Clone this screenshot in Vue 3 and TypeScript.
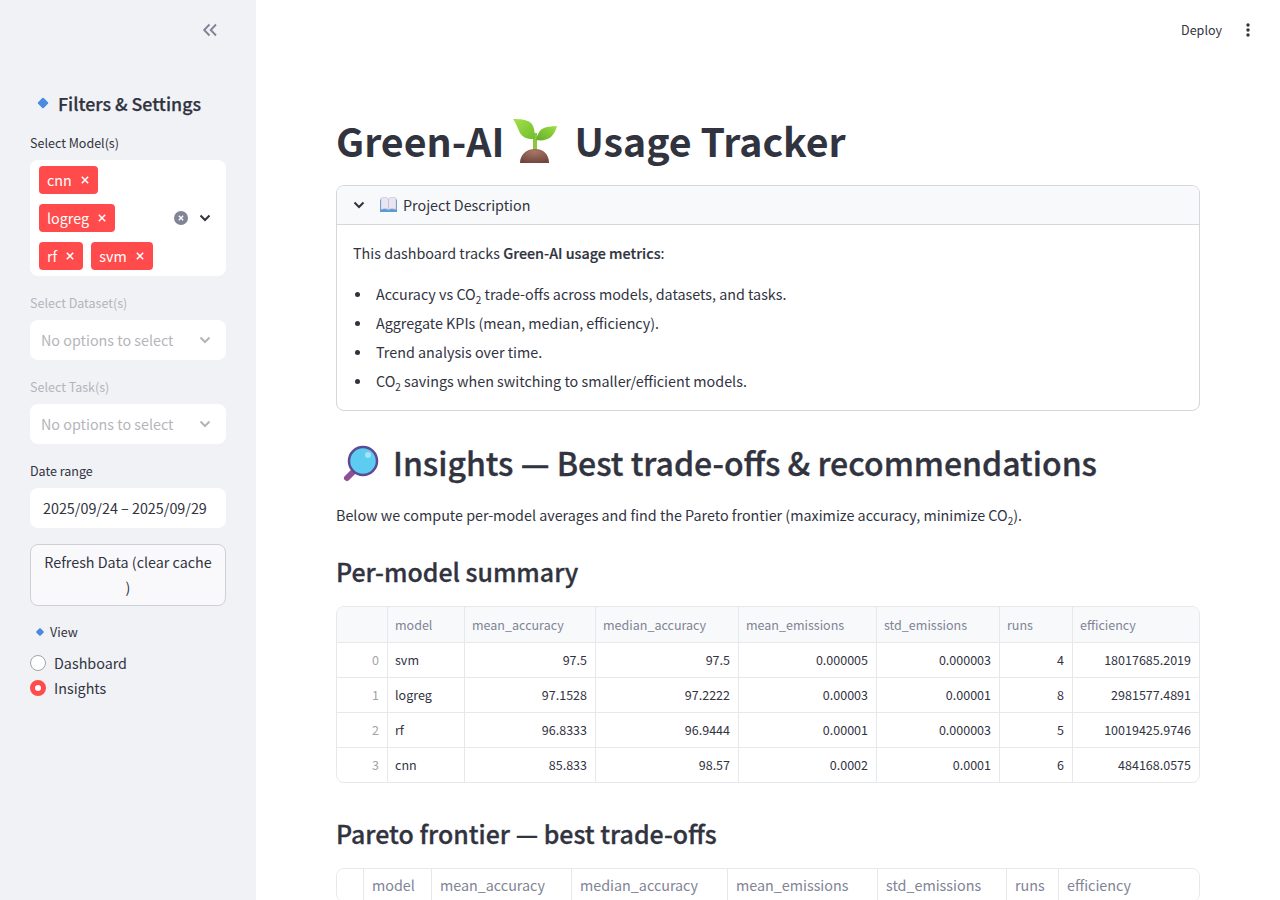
<script setup lang="ts">
import { ref } from 'vue'

interface Row {
  id: number
  model: string
  meanAcc: string
  medianAcc: string
  meanEm: string
  stdEm: string
  runs: number
  eff: string
}

const columns = ['', 'model', 'mean_accuracy', 'median_accuracy', 'mean_emissions', 'std_emissions', 'runs', 'efficiency']
const summaryWidths = [50, 77, 131, 143, 138, 123, 73, 127]
const paretoWidths = [26, 68, 140, 156, 150, 129, 52, 141]

const rows: Row[] = [
  { id: 0, model: 'svm', meanAcc: '97.5', medianAcc: '97.5', meanEm: '0.000005', stdEm: '0.000003', runs: 4, eff: '18017685.2019' },
  { id: 1, model: 'logreg', meanAcc: '97.1528', medianAcc: '97.2222', meanEm: '0.00003', stdEm: '0.00001', runs: 8, eff: '2981577.4891' },
  { id: 2, model: 'rf', meanAcc: '96.8333', medianAcc: '96.9444', meanEm: '0.00001', stdEm: '0.000003', runs: 5, eff: '10019425.9746' },
  { id: 3, model: 'cnn', meanAcc: '85.833', medianAcc: '98.57', meanEm: '0.0002', stdEm: '0.0001', runs: 6, eff: '484168.0575' },
]

const tagRows = [['cnn'], ['logreg'], ['rf', 'svm']]

const view = ref('Insights')
const views = ['Dashboard', 'Insights']
</script>

<template>
  <div class="app">
    <aside class="sidebar">
      <div class="collapse">
        <svg width="16" height="16" viewBox="0 0 16 16" fill="none" stroke="#808495" stroke-width="1.9">
          <path d="M7.500 2.500 2.200 8l5.300 5.500M14 2.500 8.700 8l5.300 5.500" />
        </svg>
      </div>
      <h2 class="side-title"><span class="diamond"></span>Filters &amp; Settings</h2>

      <label class="field-label">Select Model(s)</label>
      <div class="multi">
        <div class="tags">
          <div v-for="(group, i) in tagRows" :key="i" class="tag-row">
            <span v-for="t in group" :key="t" class="tag">
              {{ t }}
              <svg width="8" height="8" viewBox="0 0 8 8" stroke="#fff" stroke-width="1.500"><path d="M.8.8l6.400 6.400M7.200.8.800 7.200" /></svg>
            </span>
          </div>
        </div>
        <svg class="clear" width="14" height="14" viewBox="0 0 14 14">
          <circle cx="7" cy="7" r="7" fill="#808495" />
          <path d="M4.800 4.800l4.400 4.400M9.200 4.800 4.800 9.200" stroke="#fff" stroke-width="1.300" />
        </svg>
        <svg class="chev" width="12" height="8" viewBox="0 0 12 8" fill="none" stroke="#31333f" stroke-width="2">
          <path d="M1.500 1.500 6 6l4.500-4.500" />
        </svg>
      </div>

      <label class="field-label off">Select Dataset(s)</label>
      <div class="select off">
        <span>No options to select</span>
        <svg width="12" height="8" viewBox="0 0 12 8" fill="none" stroke="#b4b5bb" stroke-width="2">
          <path d="M1.500 1.500 6 6l4.500-4.500" />
        </svg>
      </div>

      <label class="field-label off">Select Task(s)</label>
      <div class="select off">
        <span>No options to select</span>
        <svg width="12" height="8" viewBox="0 0 12 8" fill="none" stroke="#b4b5bb" stroke-width="2">
          <path d="M1.500 1.500 6 6l4.500-4.500" />
        </svg>
      </div>

      <label class="field-label">Date range</label>
      <div class="date">2025/09/24 – 2025/09/29</div>

      <button class="refresh">Refresh Data (clear cache )</button>

      <div class="view-label"><span class="diamond small"></span>View</div>
      <div class="radios">
        <div v-for="v in views" :key="v" class="radio" @click="view = v">
          <span class="dot" :class="{ on: view === v }"></span>{{ v }}
        </div>
      </div>
    </aside>

    <main class="main">
      <header class="toolbar">
        <span class="deploy">Deploy</span>
        <svg width="4" height="14" viewBox="0 0 4 14" fill="#31333f">
          <circle cx="2" cy="2" r="1.700" />
          <circle cx="2" cy="7" r="1.700" />
          <circle cx="2" cy="12" r="1.700" />
        </svg>
      </header>

      <div class="content">
        <h1>
          <span>Green-AI</span>
          <svg class="sprout" width="44" height="44" viewBox="0 0 44 44">
            <defs>
              <linearGradient id="leafA" x1="0" y1="0" x2="1" y2="1">
                <stop offset="0" stop-color="#a6e04a" />
                <stop offset="1" stop-color="#6fbe2e" />
              </linearGradient>
              <linearGradient id="leafB" x1="1" y1="0" x2="0" y2="1">
                <stop offset="0" stop-color="#9ede44" />
                <stop offset="1" stop-color="#63ad2c" />
              </linearGradient>
              <radialGradient id="soil" cx=".5" cy=".2" r=".9">
                <stop offset="0" stop-color="#a67566" />
                <stop offset="1" stop-color="#6d4038" />
              </radialGradient>
            </defs>
            <rect x="20" y="14" width="4" height="18" fill="#8fc63f" />
            <path d="M0 0c7 0 14 .500 18 4 3 3 4 9 4 16-7 .500-12-1-15-6C5 10 3 4 0 0z" fill="url(#leafA)" />
            <path d="M44 7c-5 .500-11 .500-15 3-3 2-5 6-6 11 6 1 11 0 15-3 3-3 5-7 6-11z" fill="url(#leafB)" />
            <path d="M7 44c0-8 6-14 15-14s14 6 14 14z" fill="url(#soil)" />
          </svg>
          <span>Usage Tracker</span>
        </h1>

        <section class="expander">
          <div class="exp-head">
            <svg width="12" height="8" viewBox="0 0 12 8" fill="none" stroke="#31333f" stroke-width="2">
              <path d="M1.500 1.500 6 6l4.500-4.500" />
            </svg>
            <svg class="book" width="17" height="15" viewBox="0 0 17 15">
              <path d="M0 2.500h17V15H0z" fill="#5b9bd5" />
              <path d="M1 1c3-1 6-1 7.500 1v11C7 11.500 4 11.500 1 12.500zM16 1c-3-1-6-1-7.500 1v11c1.500-1.500 4.500-1.500 7.500-.5z" fill="#e9e6f2" stroke="#b9b4cf" stroke-width=".5" />
            </svg>
            <span>Project Description</span>
          </div>
          <div class="exp-body">
            <p>This dashboard tracks <strong>Green-AI usage metrics</strong>:</p>
            <ul>
              <li>Accuracy vs CO<sub>2</sub> trade-offs across models, datasets, and tasks.</li>
              <li>Aggregate KPIs (mean, median, efficiency).</li>
              <li>Trend analysis over time.</li>
              <li>CO<sub>2</sub> savings when switching to smaller/efficient models.</li>
            </ul>
          </div>
        </section>

        <h2 class="insights">
          <svg class="glass" width="38" height="38" viewBox="0 0 38 38">
            <path d="M6 33 14 25" stroke="#8e4f96" stroke-width="6" stroke-linecap="round" />
            <circle cx="22" cy="16" r="14" fill="#5ccdf0" stroke="#5d4a96" stroke-width="2.500" />
            <circle cx="27" cy="10" r="3" fill="#a5e4f8" />
          </svg>
          <span>Insights — Best trade-offs &amp; recommendations</span>
        </h2>
        <p class="lead">Below we compute per-model averages and find the Pareto frontier (maximize accuracy, minimize CO<sub>2</sub>).</p>

        <h3 class="h-summary">Per-model summary</h3>
        <div class="table-wrap">
          <table class="summary">
            <colgroup><col v-for="(w, i) in summaryWidths" :key="i" :style="{ width: w + 'px' }" /></colgroup>
            <thead><tr><th v-for="c in columns" :key="c">{{ c }}</th></tr></thead>
            <tbody>
              <tr v-for="r in rows" :key="r.id">
                <td class="idx">{{ r.id }}</td>
                <td class="txt">{{ r.model }}</td>
                <td>{{ r.meanAcc }}</td>
                <td>{{ r.medianAcc }}</td>
                <td>{{ r.meanEm }}</td>
                <td>{{ r.stdEm }}</td>
                <td>{{ r.runs }}</td>
                <td>{{ r.eff }}</td>
              </tr>
            </tbody>
          </table>
        </div>

        <h3 class="h-pareto">Pareto frontier — best trade-offs</h3>
        <div class="table-wrap">
          <table class="pareto">
            <colgroup><col v-for="(w, i) in paretoWidths" :key="i" :style="{ width: w + 'px' }" /></colgroup>
            <thead><tr><th v-for="c in columns" :key="c">{{ c }}</th></tr></thead>
          </table>
        </div>
      </div>
    </main>
  </div>
</template>

<style>
html, body {
  margin: 0;
  height: 100%;
  overflow: hidden;
}
</style>

<style scoped>
.app {
  display: flex;
  height: 900px;
  overflow: hidden;
  background: #fff;
  color: #31333f;
  font-family: "Noto Sans CJK JP", "Noto Sans", sans-serif;
  font-size: 14.33px;
  line-height: 24px;
}
.sidebar {
  width: 256px;
  flex: none;
  box-sizing: border-box;
  padding: 0 30px;
  background: #f0f2f6;
}
.collapse {
  display: flex;
  justify-content: flex-end;
  height: 16px;
  padding: 22px 8px 0 0;
}
.side-title {
  display: flex;
  align-items: center;
  height: 32px;
  margin: 49px 0 14px;
  padding-left: 9px;
  font-size: 17.8px;
  font-weight: 500;
  line-height: 30px;
  -webkit-text-stroke: .25px #31333f;
}
.diamond {
  flex: none;
  width: 8px;
  height: 8px;
  margin-right: 11px;
  background: #4a8be0;
  border-radius: 1px;
  transform: rotate(45deg);
}
.diamond.small {
  width: 6px;
  height: 6px;
  margin: 0 7px 0 7px;
}
.field-label {
  display: block;
  height: 20px;
  font-size: 12.53px;
  line-height: 20px;
}
.off {
  color: #b4b5bb;
}
.multi {
  display: flex;
  align-items: center;
  height: 116px;
  margin-top: 7px;
  margin-bottom: 17px;
  padding: 0 15px 0 9px;
  background: #fff;
  border-radius: 8px;
  box-sizing: border-box;
}
.tags {
  flex: 1;
  display: flex;
  flex-direction: column;
  gap: 10px;
}
.tag-row {
  display: flex;
  gap: 8px;
}
.tag {
  display: flex;
  align-items: center;
  gap: 9px;
  height: 28px;
  padding: 0 9px 0 8px;
  background: #ff4b4b;
  border-radius: 4px;
  color: #fff;
}
.clear {
  margin-right: 11px;
}
.select {
  display: flex;
  align-items: center;
  justify-content: space-between;
  height: 39px;
  margin-top: 7px;
  margin-bottom: 17px;
  padding: 0 15px 1px 11px;
  background: #fff;
  border-radius: 8px;
}
.date {
  height: 40px;
  margin-top: 7px;
  padding-left: 13px;
  background: #fff;
  border-radius: 8px;
  line-height: 40px;
}
.refresh {
  display: block;
  width: 100%;
  height: 62px;
  margin-top: 16px;
  padding: 0 12px 2px;
  background: #f9f9fb;
  border: 1px solid #cfd0d5;
  border-radius: 8px;
  color: #31333f;
  font: inherit;
  line-height: 25px;
}
.view-label {
  display: flex;
  align-items: center;
  margin-top: 16px;
  font-size: 12.53px;
  line-height: 20px;
}
.radios {
  margin-top: 8px;
}
.radio {
  display: flex;
  align-items: center;
  height: 25.500px;
}
.dot {
  flex: none;
  box-sizing: border-box;
  width: 16px;
  height: 16px;
  margin-right: 8px;
  background: #fff;
  border: 1px solid #a3a4aa;
  border-radius: 50%;
}
.dot.on {
  border: 5px solid #ff4b4b;
}
.main {
  flex: 1;
  min-width: 0;
}
.toolbar {
  display: flex;
  align-items: center;
  justify-content: flex-end;
  gap: 24px;
  height: 60px;
  padding-right: 30px;
  font-size: 12.53px;
}
.content {
  padding: 56px 80px 0;
}
h1 {
  display: flex;
  align-items: flex-start;
  margin: 0 0 16px;
  height: 53px;
  font-size: 39.3px;
  font-weight: 700;
  line-height: 48px;
}
.sprout {
  margin: 3px 17px 0 9px;
}
.expander {
  box-sizing: border-box;
  height: 226px;
  border: 1px solid #d5d6da;
  border-radius: 8px;
  overflow: hidden;
}
.exp-head {
  display: flex;
  align-items: center;
  height: 37px;
  padding: 0 0 1px 16px;
  background: #f8f9fb;
  border-bottom: 1px solid #d5d6da;
}
.book {
  margin: 0 6px 0 15px;
}
.exp-body {
  padding: 16px 16px 0;
}
.exp-body p {
  margin: 0 0 17px;
}
.exp-body strong {
  font-weight: 500;
  -webkit-text-stroke: .2px #31333f;
}
.exp-body ul {
  margin: 0;
  padding: 0 0 0 23px;
  list-style: none;
}
.exp-body li {
  position: relative;
  height: 24px;
  margin-bottom: 5px;
}
.exp-body li::before {
  content: "";
  position: absolute;
  left: -21px;
  top: 10px;
  width: 5px;
  height: 5px;
  background: #31333f;
  border-radius: 50%;
}
sub {
  font-size: 10px;
  line-height: 0;
}
.insights {
  display: flex;
  align-items: flex-start;
  margin: 32px 0 17px;
  height: 43px;
  font-size: 32px;
  font-weight: 500;
  line-height: 39px;
  white-space: nowrap;
  -webkit-text-stroke: .35px #31333f;
}
.glass {
  flex: none;
  margin: 2px 14px 0 5px;
}
.lead {
  margin: 0 0 16px;
}
h3 {
  margin: 0 0 17px;
  height: 34px;
  font-size: 24.9px;
  font-weight: 500;
  line-height: 32px;
  -webkit-text-stroke: .3px #31333f;
}
.h-summary {
  margin-top: 28px;
}
.h-pareto {
  margin-top: 34px;
}
.table-wrap {
  border: 1px solid #e7e8eb;
  border-radius: 8px;
  overflow: hidden;
}
table {
  width: 862px;
  border-collapse: separate;
  border-spacing: 0;
  table-layout: fixed;
}
th, td {
  box-sizing: border-box;
  border-left: 1px solid #e7e8eb;
  border-bottom: 1px solid #e7e8eb;
  padding: 0 8px;
  white-space: nowrap;
}
th:first-child, td:first-child {
  border-left: none;
}
tbody tr:last-child td {
  border-bottom: none;
  height: 34px;
}
th {
  height: 36px;
  background: #f8f9fb;
  color: #808495;
  font-weight: 400;
  text-align: left;
}
td {
  height: 35px;
  text-align: right;
}
td.txt {
  text-align: left;
}
td.idx {
  color: #a3a4aa;
}
.summary {
  font-size: 12.53px;
}
.summary th, .summary td.txt {
  padding-left: 7px;
}
.pareto {
  font-size: 14.33px;
}
.pareto th {
  height: 32px;
  background: #fff;
}
</style>
